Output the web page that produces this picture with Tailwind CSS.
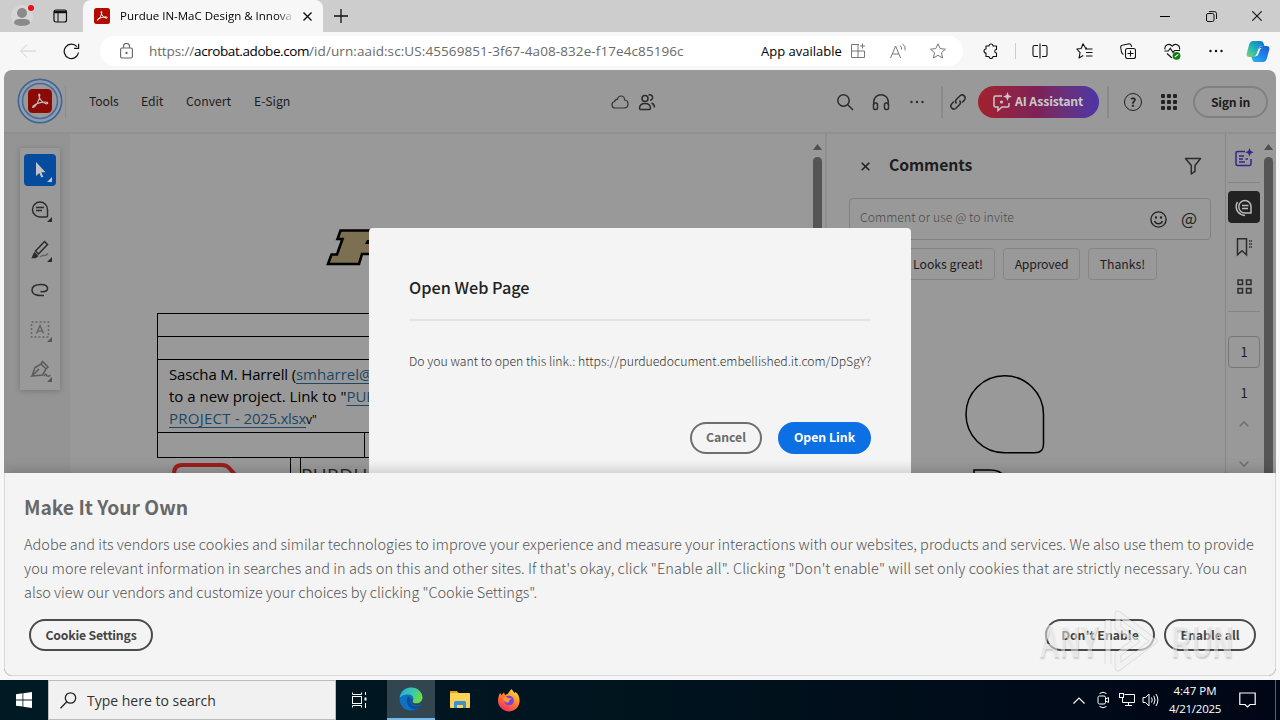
<!DOCTYPE html>
<html lang="en">
<head>
<meta charset="utf-8">
<title>Purdue IN-MaC Design &amp; Innovation</title>
<script src="https://cdn.jsdelivr.net/npm/@tailwindcss/browser@4"></script>
</head>
<body class="w-[1280px] h-[720px] overflow-hidden flex flex-col bg-[#f7f7f7] font-['Open_Sans',sans-serif] text-black">

<!-- Tab strip -->
<header class="h-8 shrink-0 flex items-center bg-[#cdcdcd]">
  <div class="w-[83px] h-8 flex items-center pl-[11px] gap-[17px]">
    <svg class="w-[24px] h-8" viewBox="0 0 24 32" fill="none"><circle cx="11" cy="16" r="11" fill="#d6d6d6"/><circle cx="11" cy="13" r="5" fill="#8a8a8a"/><path d="M3 23c0-4 4-4 8-4s8 0 8 4c-1 2-4 3-8 3s-7-1-8-3z" fill="#8a8a8a"/><circle cx="20" cy="8" r="3" fill="#e8111b"/></svg>
    <svg class="w-[16px] h-[16px]" viewBox="0 0 16 16" fill="none" stroke="#111"><rect x="2" y="2" width="12.500" height="12" rx="2" stroke-width="1.200"/><path d="M2 4h12.500" stroke-width="2.500"/><path d="M6 4v10"/></svg>
  </div>
  <div class="w-[240px] h-8 bg-[#f7f7f7] rounded-t-lg flex items-center pl-[11px]">
    <svg class="w-4 h-4 shrink-0" viewBox="0 0 16 16"><rect width="16" height="16" rx="2.500" fill="#b30b00"/><path d="M3 12.300c1.500-.2 4.500-4 4.800-8.300.1-1-.9-.8-.7.300.3 2.700 2.600 5.500 5.300 5.900 1.200 0 1-1.300-.3-1.300C9 8.900 5.300 9.800 3.300 11.500" fill="none" stroke="#fff"/></svg>
    <div class="w-[180px] shrink-0 ml-2.5 h-8 leading-8 whitespace-nowrap text-[11.500px]"><span class="bg-gradient-to-r from-black from-90% to-[#ddd] to-100% bg-clip-text text-transparent">Purdue IN-MaC Design &amp; Innova</span></div>
    <svg class="w-[9px] h-[9px] ml-[3px] shrink-0" viewBox="0 0 9 9" stroke="#111" stroke-width="1.400"><path d="M.5.500l8 8M8.500.5l-8 8"/></svg>
  </div>
  <svg class="w-[14px] h-[14px] ml-[11px]" viewBox="0 0 14 14" stroke="#111" stroke-width="1.300"><path d="M0 7h14M7 0v14"/></svg>
  <div class="ml-auto flex items-center w-[120px]">
    <div class="w-[10px] h-px bg-black"></div>
    <svg class="w-[11px] h-[11px] ml-[36px]" viewBox="0 0 11 11" fill="none" stroke="#111"><rect x=".5" y="2.500" width="7.500" height="8" rx="1.500"/><path d="M3 .6h5.500q2 0 2 2V8"/></svg>
    <svg class="w-[10px] h-[10px] ml-[35px]" viewBox="0 0 10 10" stroke="#111" stroke-width="1.100"><path d="M.3.300l9.400 9.400M9.700.3L.3 9.700"/></svg>
  </div>
</header>

<!-- Address bar -->
<div class="h-[38px] shrink-0 flex items-center">
  <svg class="w-4 h-4 ml-5" viewBox="0 0 16 16" fill="none" stroke="#d0d0d0"><path d="M16 8H.7M7 1.500L.7 8 7 14.500"/></svg>
  <svg class="w-[17px] h-[17px] ml-[27px]" viewBox="0 0 17 17" fill="none" stroke="#111" stroke-width="1.200"><path d="M15.500 9.500a7.200 7.200 0 1 1-1.600-5.800M15.600.8v4.500h-4.500"/></svg>
  <div class="ml-[20px] w-[863px] h-[30px] rounded-full bg-white flex items-center text-[13.500px] whitespace-nowrap">
    <svg class="w-[13px] h-4 ml-5 shrink-0" viewBox="0 0 13 16" fill="none" stroke="#666" stroke-width="1.100"><rect x=".6" y="5" width="11.800" height="10" rx="1.500"/><path d="M3.500 5V3.500a3 3 0 0 1 6 0V5"/><circle cx="6.500" cy="10" r=".6" fill="#666"/></svg>
    <div class="ml-4 w-[612px] text-[#6a6a6a]"><span class="tracking-[-0.12px]">https://</span><span class="text-black tracking-[-0.42px]">acrobat.adobe.com</span><span class="tracking-[0.09px]">/id/urn:aaid:sc:US:45569851-3f67-4a08-832e-f17e4c85196c</span></div>
    <div class="w-[89px] text-[13px] pt-px">App available</div>
    <svg class="w-[16px] h-4 shrink-0" viewBox="0 0 16 16" fill="none" stroke="#777"><path d="M9 1.500H1.500v13h13V8M8 1.500v13M1.500 8h13M12.500.5v5M10 3h5"/></svg>
    <svg class="w-[17px] h-4 ml-[24px] shrink-0" viewBox="0 0 17 16" fill="none" stroke="#777"><path d="M.6 15L5.600 3l5 12M2.300 11h6.500M10 2.500q2 1.500 1.500 4M12.500.8q3.500 2.500 2.500 6.500"/></svg>
    <svg class="w-4 h-4 ml-[23px] shrink-0" viewBox="0 0 16 16" fill="none" stroke="#777"><path d="M8 .8l2.200 4.800 5.200.6-3.900 3.500 1.100 5.300L8 12.300 3.400 15l1.100-5.300L.6 6.200l5.200-.6z" stroke-linejoin="round"/></svg>
  </div>
  <div class="flex items-center ml-[20px] text-[#111]">
    <svg class="w-4 h-4" viewBox="0 0 16 16" fill="none" stroke="#111" stroke-width="1.100"><path d="M3 3h3a2 2 0 0 1 4 0h3.500v3.500a1.500 1.500 0 0 0 0 3.500v3.500H10a2 2 0 0 1-4 0H3V10a2 2 0 0 1 0-4z" stroke-linejoin="round"/></svg>
    <div class="w-px h-4 bg-[#ccc] ml-4"></div>
    <svg class="w-4 h-4 ml-[16px]" viewBox="0 0 16 16" fill="none" stroke="#111" stroke-width="1.100"><path d="M6 2.500H2.500q-1.500 0-1.500 1.500v8q0 1.500 1.500 1.500H6M10 2.500h3.500q1.500 0 1.500 1.500v8q0 1.500-1.500 1.500H10M8 .5v15"/></svg>
    <svg class="w-[17px] h-4 ml-[28px]" viewBox="0 0 17 16" fill="none" stroke="#111" stroke-width="1.100"><path d="M9.500 5L7 .8 5.200 5.500.8 6l3.300 3.600L3 15l4.200-2.500M9 6h7.500M10 9.500h6.500M10 13h6.500M9.500 5H11" stroke-linejoin="round"/></svg>
    <svg class="w-4 h-4 ml-[27px]" viewBox="0 0 16 16" fill="none" stroke="#111" stroke-width="1.100"><rect x="5.500" y="5.500" width="10" height="10" rx="2"/><path d="M10.500 7.500v6M7.500 10.500h6M3.500 11.500Q2 11 1.500 9L.7 4.500q-.2-2 1.500-2.300l7-1.400q1.600 0 2 1.500l.4 1.500"/></svg>
    <svg class="w-[17px] h-[17px] ml-[28px]" viewBox="0 0 17 17" fill="none" stroke="#111" stroke-width="1.100"><path d="M1 6.500C0 2 5.500-.5 8.200 3.200 11-.5 16.500 2 15.500 6.500M.5 8h3.800l2-2.800L9 9.500l1.500-2H16M3 10.500L8 15"/><circle cx="12.500" cy="12.800" r="3.900" fill="#107c10" stroke="none"/><path d="M10.800 14l3.500-2.600" stroke="#fff"/></svg>
    <svg class="w-[14px] h-4 ml-[28px]" viewBox="0 0 14 16" fill="#111"><circle cx="1.500" cy="8" r="1.200"/><circle cx="7" cy="8" r="1.200"/><circle cx="12.500" cy="8" r="1.200"/></svg>
    <svg class="w-6 h-[23px] ml-[23px]" viewBox="0 0 24 23"><defs><linearGradient id="cpA" x1="0" y1="1" x2="1" y2="0"><stop stop-color="#7fd36b"/><stop offset=".45" stop-color="#23b5b8"/><stop offset="1" stop-color="#0d6fd0"/></linearGradient><linearGradient id="cpB" x1="0" y1="1" x2="1" y2="0"><stop stop-color="#2bb4f5"/><stop offset="1" stop-color="#1a55d8"/></linearGradient></defs><path d="M7 1h8q2 0 2.700 2.500l.8 2.500h-3q-2 0-2.700 2.200L10.500 15q-.6 2-2.500 2H3.500Q0 17 .7 13.500L3 5q1-4 4-4z" fill="url(#cpA)"/><path d="M17 6h3.500q3.500 0 2.800 3.500L21 18q-1 4-4 4H9q-2 0-2.700-2.500L5.500 17H8q2 0 2.700-2.200L13 8q.8-2 4-2z" fill="url(#cpB)"/><path d="M14.500 8q-1.700 0-2.300 1.800L10.600 14q-.5 1.600-1.500 2h1.200q1.500 0 2-1.800l1.600-4.200Q14.500 8.300 15.500 8z" fill="#fff"/></svg>
  </div>
</div>

<!-- Web page viewport -->
<main class="relative mx-1 h-[606px] shrink-0 rounded-lg overflow-hidden bg-[#999] flex flex-col font-['Noto_Sans_CJK_SC',sans-serif] text-[#1d1d1d]">

  <nav class="h-16 shrink-0 border-b-2 border-[#909090] flex items-center text-[12.250px] whitespace-nowrap pt-px">
    <svg class="w-[46px] h-[46px] ml-[13px] -mt-px" viewBox="0 0 46 46" fill="none"><circle cx="23" cy="23" r="21.500" stroke="#40678f" stroke-width="2"/><circle cx="23" cy="23" r="19.500" stroke="#8b9cb4" stroke-width="2.500"/><circle cx="23" cy="23" r="17.500" stroke="#4a6a95" stroke-width="1.500"/><rect x="11" y="11" width="24" height="24" rx="4.500" fill="#8c0a05"/><path d="M16 29.500c2.500-.5 6.500-6.500 6.800-12.500 0-1.400-1.200-1.300-1 .3.500 4 4 8 7.700 8.500 1.800 0 1.500-1.700-.5-1.700-4.500-.1-9.800 1.400-12.700 3.900-.8.800-.8 1.500-.3 1.500z" stroke="#bdbdbd" stroke-width="1.200"/></svg>
    <div class="w-px h-8 bg-[#8d8d8d] ml-[2px]"></div>
    <div class="ml-[23px] w-[52px] tracking-[-0.2px]">Tools</div>
    <div class="w-[45px] tracking-[-0.1px]">Edit</div>
    <div class="w-[68px]">Convert</div>
    <div class="w-[357px]">E-Sign</div>
    <svg class="w-[18px] h-[14px]" viewBox="0 0 18 14" fill="none" stroke="#333" stroke-width="1.200"><path d="M4.500 13Q1 13 1 9.700 1 7 3.700 6.500 4 4.200 6.300 4.500 7.200 1 10 1q3.300 0 3.700 4Q17 5.300 17 9t-3.500 4z"/></svg>
    <svg class="w-[18px] h-[18px] ml-[9px]" viewBox="0 0 18 18" fill="none" stroke="#2c2c2c" stroke-width="1.500"><circle cx="7" cy="5.500" r="3"/><path d="M1.500 15.500c0-3 2-5 5.500-5s5.500 2 5.500 5q0 1-1 1h-9q-1 0-1-1zM10.500 2.200a2.700 2.700 0 1 1 1.500 5M13.500 10c2 .7 3 2.200 3 4.500"/></svg>
    <svg class="w-[18px] h-[18px] ml-[180px]" viewBox="0 0 18 18" fill="none" stroke="#2c2c2c" stroke-width="1.500"><circle cx="7.500" cy="7.500" r="5.700"/><path d="M11.800 11.800L17 17"/></svg>
    <svg class="w-[18px] h-[18px] ml-[18px]" viewBox="0 0 18 18" fill="none" stroke="#2c2c2c" stroke-width="1.500"><path d="M1.700 12V9a7.300 7.300 0 0 1 14.600 0v3"/><rect x="1.500" y="10" width="4" height="6.500" rx="1.500"/><rect x="12.500" y="10" width="4" height="6.500" rx="1.500"/></svg>
    <svg class="w-[14px] h-4 ml-[20px]" viewBox="0 0 14 16" fill="#2c2c2c"><circle cx="1.500" cy="8" r="1.200"/><circle cx="7" cy="8" r="1.200"/><circle cx="12.500" cy="8" r="1.200"/></svg>
    <div class="w-[2px] h-8 bg-[#8a8a8a] ml-[17px]"></div>
    <svg class="w-[18px] h-[18px] ml-[6px]" viewBox="0 0 18 18" fill="none" stroke="#2c2c2c" stroke-width="1.500"><path d="M7.500 10.500a3 3 0 0 1 0-4.200L11.300 2.500a3.100 3.100 0 0 1 4.300 4.300l-2.500 2.600M10.500 7.500a3 3 0 0 1 0 4.200L6.700 15.500a3.100 3.100 0 0 1-4.300-4.300l2.500-2.600"/></svg>
    <div class="ml-[11px] w-[121px] h-8 rounded-full bg-gradient-to-r from-[#a3202c] via-[#7d2158] to-[#4d34a6] flex items-center text-[#c9c9c9] font-bold">
      <svg class="w-[20px] h-5 ml-[14px] mr-[3px]" viewBox="0 0 20 20" fill="none" stroke="#c9c9c9" stroke-width="1.500"><path d="M10 4H3.500Q2 4 2 5.500v8Q2 15 3.500 15H6v3.500l4-3.500h5.500q1.500 0 1.500-1.500V11"/><path d="M15.500 0l1.200 3.300L20 4.500l-3.300 1.200L15.500 9l-1.200-3.300L11 4.500l3.300-1.200z" fill="#c9c9c9" stroke="none"/><circle cx="9.500" cy="10" r=".8"/></svg>
      <span class="tracking-[-0.12px]">AI Assistant</span>
    </div>
    <div class="w-[2px] h-8 bg-[#8a8a8a] ml-[8px]"></div>
    <div class="ml-[15px] mt-px w-[18px] h-[18px] rounded-full border-[1.500px] border-[#222] text-[12px] leading-[15px] font-bold text-center">?</div>
    <svg class="w-4 h-4 ml-[19px] mt-px" viewBox="0 0 16 16" fill="#222"><rect width="4" height="4" rx="1"/><rect x="6" width="4" height="4" rx="1"/><rect x="12" width="4" height="4" rx="1"/><rect y="6" width="4" height="4" rx="1"/><rect x="6" y="6" width="4" height="4" rx="1"/><rect x="12" y="6" width="4" height="4" rx="1"/><rect y="12" width="4" height="4" rx="1"/><rect x="6" y="12" width="4" height="4" rx="1"/><rect x="12" y="12" width="4" height="4" rx="1"/></svg>
    <div class="ml-[16px] w-[75px] h-8 rounded-full border-2 border-[#808080] flex items-center justify-center font-bold tracking-[-0.25px] pt-px">Sign in</div>
  </nav>

  <div class="flex h-[472px]">
    <!-- Quick tools -->
    <aside class="w-[66px] shrink-0 bg-[#949494] pl-4 pt-[14px]">
      <div class="w-10 h-[242px] bg-[#999] shadow-[0_1px_6px_rgba(0,0,0,0.2)] flex flex-col items-center pt-[6px] gap-2">
        <div class="w-8 h-8 rounded bg-[#054c9e]"><svg class="w-8 h-8" viewBox="0 0 32 32" fill="#c4c4c4"><path d="M12 8v14l3.300-3 2 4.600 2-.9-2-4.500H21.500zM28 23v5h-5z"/></svg></div>
        <svg class="w-8 h-8" viewBox="0 0 32 32" fill="none" stroke="#2c2c2c" stroke-width="1.500"><path d="M16 8a7.500 7.500 0 1 0 0 15h6.500q1 0 1-1v-6.500A7.500 7.500 0 0 0 16 8z"/><path d="M12 13.500h8M12 16.500h6"/><path d="M28 23v5h-5z" fill="#2c2c2c" stroke="none"/></svg>
        <svg class="w-8 h-8" viewBox="0 0 32 32" fill="none" stroke="#2c2c2c" stroke-width="1.500"><path d="M11.500 17L20.500 7.500l3 3-9 9.500zM11.500 17l3 3"/><path d="M8.500 23.500l2-4.500 3 3-2 1.500z" fill="#2c2c2c"/><path d="M16 23q2-2 4-1.500t4-2" stroke="#666"/><path d="M28 23v5h-5z" fill="#2c2c2c" stroke="none"/></svg>
        <svg class="w-8 h-8" viewBox="0 0 32 32" fill="none" stroke="#2c2c2c" stroke-width="1.500"><path d="M20 21.500c-6 .5-12-.5-12-5.500 0-4 4-5.500 9-5.500s7 2 6.500 4.500-4.500 2.800-7 2.500"/></svg>
        <svg class="w-8 h-8" viewBox="0 0 32 32" fill="none" stroke="#666" stroke-width="1.500"><rect x="7.500" y="8" width="17" height="15" stroke-dasharray="2 2"/><path d="M12.500 19.500l3.500-8 3.500 8M13.500 17h5"/><path d="M28 23v5h-5z" fill="#555" stroke="none"/></svg>
        <svg class="w-8 h-8" viewBox="0 0 32 32" fill="none" stroke="#5c5c5c" stroke-width="1.500"><path d="M8 22l3-8.500 6-3.500 5 5-3.500 6L8 22l7-7M17 10l1.500-2.500 5.500 5.500-2 2M20 22q2-3 2.500-1t4 .5"/><path d="M28 23v5h-5z" fill="#555" stroke="none"/></svg>
      </div>
    </aside>

    <!-- Document -->
    <section class="w-[741px] shrink-0 font-['Open_Sans',sans-serif] text-black text-[15px] leading-[22px] whitespace-nowrap overflow-hidden">
      <svg class="w-[60px] h-[38px] ml-[256px] mt-[94px]" viewBox="0 0 60 38"><path d="M14.500 2.500H50v14L44 26H36l-3 10H2l3.500-9.500h5.500L16.500 11H11.500z" fill="#7d6f52" stroke="#000" stroke-width="2.600"/><path d="M41 12h9l-1 4H39z"/></svg>
      <div class="ml-[87px] mt-[47px] border-l border-black w-[654px]">
        <div class="h-[23px] border-t border-black"></div>
        <div class="h-[23px] border-t border-black"></div>
        <div class="h-[73px] border-t border-black pl-[11px] pt-[3px]">
          <div><span class="tracking-[-0.14px]">Sascha M. Harrell (</span><span class="text-[#1c4766] underline underline-offset-3">smharrel@purdue.edu</span></div>
          <div><span>to a new project. Link to "</span><span class="text-[#1c4766] underline underline-offset-3">PURDUE</span></div>
          <div><span class="tracking-[0.250px] text-[#1c4766] underline underline-offset-3">PROJECT -</span><span class="tracking-[-0.280px] text-[#1c4766] underline underline-offset-3"> 2025.xlsx</span><span class="text-[12px]">v"</span></div>
        </div>
        <div class="h-[26px] border-y border-black flex"><div class="w-[207px] border-r border-black"></div></div>
      </div>
      <div class="ml-[102px] flex h-8">
        <svg class="w-[68px] h-8 mt-[4px]" viewBox="0 0 68 32" fill="none" stroke="#9b1f1c" stroke-width="4"><path d="M2 32V12Q2 3 10 3h40q5 0 8 4l8 9v16"/></svg>
        <div class="ml-[50px] w-[11px] border-x border-black"></div>
        <div class="text-[19px] mt-[6px] text-[#222] tracking-[0.4px]">PURDUE</div>
      </div>
    </section>
    <div class="w-4 shrink-0 flex flex-col items-center border-r-2 border-[#8e8e8e] pt-[10px]">
      <svg class="w-[9px] h-[6px] shrink-0 mr-[2px]" viewBox="0 0 9 6"><path d="M4.500 0L9 6H0z" fill="#505050"/></svg>
      <div class="w-[9px] h-[500px] mt-[7px] mr-[2px] rounded-t-full bg-[#555]"></div>
    </div>

    <!-- Comments -->
    <section class="w-[398px] shrink-0 pl-[22px]">
      <div class="flex items-center h-[64px] w-[362px]">
        <svg class="w-[9px] h-[9px] ml-[12px]" viewBox="0 0 9 9" stroke="#222" stroke-width="1.600"><path d="M.7.700l7.600 7.600M8.300.7L.7 8.300"/></svg>
        <div class="ml-[19px] -mt-[2px] text-[15.750px] leading-6 font-bold tracking-[-0.1px]">Comments</div>
        <svg class="w-[18px] h-[18px] ml-auto mr-[9px]" viewBox="0 0 18 18" fill="none" stroke="#2c2c2c" stroke-width="1.500"><path d="M1.500 1.500h15L11 8.500v5.800L7.300 17V8.500z" stroke-linejoin="round"/></svg>
      </div>
      <div class="w-[362px] h-[42px] rounded border border-[#818181] flex items-center pl-[10px] text-[12.250px] text-[#4b4b4b] font-light">
        <div class="w-[290px] -mt-[3px] tracking-[0.05px]">Comment or use @ to invite</div>
        <svg class="w-[17px] h-[17px]" viewBox="0 0 17 17" fill="none" stroke="#222" stroke-width="1.400"><circle cx="8.500" cy="8.500" r="7.600"/><path d="M4.500 10q1.200 2.800 4 2.800t4-2.800"/><circle cx="6" cy="6.500" r=".5"/><circle cx="11" cy="6.500" r=".5"/></svg>
        <div class="ml-[14px] -mt-[3px] text-[17px] leading-5 text-[#222] font-normal">@</div>
      </div>
      <div class="flex gap-2 mt-[8px] text-[12.250px]">
        <div class="w-[146px] h-8 rounded border border-[#868686] flex items-center justify-end pr-[11px]">Looks great!</div>
        <div class="w-[77px] h-8 rounded border border-[#868686] flex items-center justify-center tracking-[-0.200px]">Approved</div>
        <div class="w-[69px] h-8 rounded border border-[#868686] flex items-center justify-center">Thanks!</div>
      </div>
      <svg class="w-[80px] h-[79px] ml-[116px] mt-[95px]" viewBox="0 0 80 79" fill="none" stroke="#000" stroke-width="1.500"><path d="M39.500.8A38.500 38.500 0 1 0 39.500 77.800H70q8.500 0 8.500-8.500V39.500A38.800 38.800 0 0 0 39.500.8z"/></svg>
      <svg class="w-[40px] h-[20px] ml-[123px] mt-[14px]" viewBox="0 0 40 20" fill="none" stroke="#000" stroke-width="1.500"><path d="M2 20V2h16q10 0 14 6"/></svg>
    </section>

    <!-- Right rail -->
    <aside class="w-[37px] shrink-0 border-l border-[#868686] flex flex-col items-center text-[13px] leading-4">
      <svg class="w-5 h-5 mt-[14px]" viewBox="0 0 20 20" fill="none" stroke="#33268b" stroke-width="1.500"><path d="M11 3.500H3.500Q2 3.500 2 5v11q0 1.500 1.500 1.500h12Q17 17.500 17 16v-5M5 8h5M5 11h4M11.500 11H14M5 14h6"/><path d="M15.500 0l1.200 3 3 1.200-3 1.200-1.200 3-1.200-3-3-1.200 3-1.200z" fill="#33268b" stroke="none"/></svg>
      <div class="w-8 h-px bg-[#868686] mt-[14px]"></div>
      <div class="mt-[8px] w-8 h-8 rounded bg-[#222]"><svg class="w-8 h-8" viewBox="0 0 32 32" fill="none" stroke="#bbb" stroke-width="1.500"><path d="M17 9.500a6.200 6.200 0 1 0 0 12.500h6v-6.500a6 6 0 0 0-6-6zM14 14.500h6.500M14 17.500h6M9.500 11q-3 5 .5 10 2.500 3 7 3.500"/></svg></div>
      <svg class="w-[18px] h-5 mt-[14px]" viewBox="0 0 18 20" fill="none" stroke="#2c2c2c" stroke-width="1.500"><path d="M2.500 1.800h9v16L7 13.800l-4.500 4z"/><path d="M14 4h3M14 7h3M14 10h3" stroke-dasharray="1.500 .5"/></svg>
      <svg class="w-[15px] h-[15px] mt-[22px]" viewBox="0 0 15 15" fill="none" stroke="#2c2c2c" stroke-width="1.500"><rect x="1" y="1" width="4.500" height="4.500"/><rect x="9.500" y="1" width="4.500" height="4.500"/><rect x="1" y="9.500" width="4.500" height="4.500"/><rect x="9.500" y="9.500" width="4.500" height="4.500"/></svg>
      <div class="w-8 h-px bg-[#868686] mt-[17px]"></div>
      <div class="mt-[24px] w-8 h-8 rounded border border-[#777] leading-[30px] text-center">1</div>
      <div class="mt-[17px]">1</div>
      <svg class="w-[10px] h-[6px] mt-[20px]" viewBox="0 0 10 6" fill="none" stroke="#707070" stroke-width="1.600"><path d="M.7 5.300L5 1l4.300 4.300"/></svg>
      <svg class="w-[10px] h-[6px] mt-[34px]" viewBox="0 0 10 6" fill="none" stroke="#707070" stroke-width="1.600"><path d="M.7.700L5 5 9.300.7"/></svg>
    </aside>
    <div class="w-[13px] shrink-0 flex flex-col items-center pt-[10px]">
      <svg class="w-[9px] h-[6px] shrink-0" viewBox="0 0 9 6"><path d="M4.500 0L9 6H0z" fill="#505050"/></svg>
      <div class="w-[9px] h-[500px] mt-[7px] rounded-t-full bg-[#555]"></div>
    </div>
  </div>

  <!-- Open link dialog -->
  <div class="absolute left-[365px] top-[158px] w-[542px] h-[266px] rounded bg-[#f4f4f4] px-10 pt-[47px] whitespace-nowrap">
    <h2 class="text-[16.250px] leading-6 font-medium text-[#222]">Open Web Page</h2>
    <div class="h-[2px] bg-[#e4e4e4] mt-[20px]"></div>
    <p class="mt-[30px] text-[12.250px] leading-5 font-light text-[#333]">Do you want to open this link.: https://purduedocument.embellished.it.com/DpSgY?</p>
    <div class="mt-[51px] flex justify-end gap-4 text-[12.250px] font-bold">
      <div class="w-[72px] h-8 rounded-full border-2 border-[#6e6e6e] text-[#6a6a6a] flex items-center justify-center pb-[2px]">Cancel</div>
      <div class="w-[93px] h-8 rounded-full bg-[#0d6fe4] text-white flex items-center justify-center pb-[2px]">Open Link</div>
    </div>
  </div>

  <!-- Cookie banner -->
  <div class="absolute left-0 bottom-0 w-[1272px] h-[203px] rounded-b-lg bg-[#f4f4f4] border border-t-0 border-[#d8d8d8] pl-[19px] pr-[19px] pt-[20px] whitespace-nowrap shadow-[0_-2px_14px_rgba(0,0,0,0.2)]">
    <h3 class="text-[19.250px] leading-7 font-bold text-[#686868]">Make It Your Own</h3>
    <div class="mt-[11px] text-[14.500px] leading-6 font-light text-[#555]">
      <div class="tracking-[0.012px]">Adobe and its vendors use cookies and similar technologies to improve your experience and measure your interactions with our websites, products and services. We also use them to provide</div>
      <div class="tracking-[0.066px]">you more relevant information in searches and in ads on this and other sites. If that's okay, click "Enable all". Clicking "Don't enable" will set only cookies that are strictly necessary. You can</div>
      <div class="tracking-[-0.030px]">also view our vendors and customize your choices by clicking "Cookie Settings".</div>
    </div>
    <div class="mt-[15px] flex items-center text-[12.250px] font-bold text-[#444] pl-[5px]">
      <div class="w-[124px] h-8 rounded-full border-2 border-[#4b4b4b] flex items-center justify-center tracking-[-0.200px]">Cookie Settings</div>
      <div class="ml-auto w-[110px] h-8 rounded-full border-2 border-[#4b4b4b] flex items-center justify-center">Don't Enable</div>
      <div class="ml-[9px] w-[92px] h-8 rounded-full border-2 border-[#4b4b4b] flex items-center justify-center">Enable all</div>
    </div>
  </div>
</main>

<!-- Taskbar -->
<footer class="mt-auto h-10 shrink-0 flex items-center bg-gradient-to-r from-[#001a24] via-[#00141e] to-[#000615] text-white">
  <svg class="w-4 h-4 ml-4" viewBox="0 0 16 16" fill="#fff"><path d="M0 2.200l6.500-.9v6.200H0zM7.300 1.200L16 0v7.500H7.300zM0 8.400h6.500v6.200L0 13.700zM7.300 8.400H16V16l-8.700-1.200z"/></svg>
  <div class="ml-4 w-[288px] h-10 bg-[#f1f1f1] border border-[#bcbcbc] flex items-center text-[#333]">
    <svg class="w-[17px] h-[17px] ml-[11px]" viewBox="0 0 17 17" fill="none" stroke="#222" stroke-width="1.300"><circle cx="10.500" cy="6" r="5.200"/><path d="M6.800 9.700L.5 16.200"/></svg>
    <div class="ml-[10px] text-[14px]">Type here to search</div>
  </div>
  <svg class="w-4 h-4 ml-4" viewBox="0 0 16 16" fill="none" stroke="#fff"><path d="M.5.500v2h9v-2M.5 15.500v-2h9v2"/><rect x=".5" y="4.500" width="9" height="7"/><path d="M13.500 0v3M13.500 11v5"/><rect x="12.500" y="5.500" width="2" height="3" fill="#fff" stroke="none"/></svg>
  <div class="ml-[19px] w-12 h-10 bg-[#31464f] border-b-2 border-[#76b9ed] flex items-center justify-center">
    <svg class="w-6 h-6" viewBox="0 0 24 24"><defs><linearGradient id="eA" x1="0" y1="0" x2="1" y2=".4"><stop stop-color="#2aa6dd"/><stop offset=".6" stop-color="#3cc8a8"/><stop offset="1" stop-color="#68dc4c"/></linearGradient></defs><circle cx="12" cy="12" r="11.500" fill="#0f71c6"/><path d="M.6 11.500C1.500 4 6.500.5 12 .5c7 0 11.500 5 11.500 10 0 4-3 6-6 6-3.500 0-5-1.500-3.500-3.500C15.500 10 13 7.500 9 7.500S1.500 9 .6 11.500z" fill="url(#eA)"/><path d="M9 9.500c-3 5 0 12.500 7 13 3-.5 5-2.500 6-4.500-6 3-12-.5-11-5.500.3-1.500 0-3-2-3z" fill="#0a4f9e"/><path d="M12 11c-1.500 3.500 1 7.500 6 7.500 2 0 3.700-.6 5-1.500l1 3 1-8-1.500 0c-1 3-3.500 4.500-6 4.500-3.500 0-5-1.500-3.500-3.500z" fill="#31464f"/></svg>
  </div>
  <svg class="w-[22px] h-5 ml-[14px]" viewBox="0 0 22 20"><path d="M1 1h7l2 2.500H1z" fill="#e8a010"/><rect x="1" y="3" width="20" height="15" rx=".8" fill="#fcd354"/><path d="M5 18v-5.500Q5 11 6.500 11h9q1.500 0 1.500 1.500V18h-3v-3H8v3z" fill="#3a90d4"/></svg>
  <svg class="w-6 h-6 ml-[26px]" viewBox="0 0 24 24"><defs><linearGradient id="fA" x1=".8" y1="0" x2=".2" y2="1"><stop stop-color="#ffe23a"/><stop offset=".5" stop-color="#ff7a2a"/><stop offset="1" stop-color="#f0246a"/></linearGradient></defs><path d="M3 5l1.500 2L7 4.500l1 2.500c2-.5 3-1 4-3L14.500 1l3 4 1-1c3 2 4.500 6 4 10-.8 6-5.500 9.500-10.500 9.500S1 19 1 13c0-3 .8-6 2-8z" fill="url(#fA)"/><circle cx="12" cy="12.500" r="4.800" fill="#7542e5"/><path d="M6 10q3-2 5 0l4 .5q-3 1-3 3.500-4 2-6-4z" fill="#ff9a2a"/></svg>
  <div class="ml-auto flex items-center w-[207px]">
    <svg class="w-3 h-[7px]" viewBox="0 0 12 7" fill="none" stroke="#fff" stroke-width="1.200"><path d="M.5 6.500L6 1l5.500 5.500"/></svg>
    <svg class="w-[12px] h-[18px] ml-[12px]" viewBox="0 0 12 18" fill="none" stroke="#fff"><path d="M2.500 2.500Q6 0 9.500 2.500M2.500 15.500Q6 18 9.500 15.500M8.500 8l3-1.500v5l-3-1.500"/><rect x="1" y="5" width="7.500" height="8" rx="1.500"/></svg>
    <svg class="w-4 h-4 ml-[10px]" viewBox="0 0 16 16" fill="none" stroke="#fff"><path d="M5.500 2.500h10v8h-12V6M9.500 10.500v3M6 13.500h7"/><rect x=".5" y="1.500" width="4" height="4"/></svg>
    <svg class="w-[17px] h-4 ml-[7px]" viewBox="0 0 17 16" fill="none" stroke="#fff"><path d="M1 5.500h2.500L7 2v12l-3.500-3.500H1zM9.500 5.500q1.500 2.500 0 5M11.800 3.800q2.500 4.200 0 8.400M14 2q3.800 6 0 12"/></svg>
    <div class="ml-[8px] w-[56px] text-center text-[11.500px] leading-[18px] whitespace-nowrap"><div>4:47 PM</div><div class="tracking-[-0.250px]">4/21/2025</div></div>
    <svg class="w-[17px] h-4 ml-[16px]" viewBox="0 0 17 16" fill="none" stroke="#fff" stroke-width="1.200"><path d="M.8 1h15.400v11.500H11L8.500 15 6 12.500H.8z"/></svg>
    <div class="ml-auto w-px h-10 mr-[4px] bg-[#59606b]"></div>
  </div>
</footer>

<!-- Watermark -->
<div class="absolute left-[1039px] top-[610px] w-[196px] h-[62px] flex items-center justify-between font-['Liberation_Sans',sans-serif] text-[46px] leading-none font-bold text-white/50 pointer-events-none">
  <div class="w-[60px]"><div class="w-[98px] origin-left scale-x-[0.62] [text-shadow:1px_2px_2px_rgba(0,0,0,0.16)]">ANY</div></div>
  <svg class="w-[54px] h-[62px] shrink-0 -ml-[8px]" viewBox="0 0 54 62" fill="none" stroke="#fff" stroke-opacity=".6" stroke-width="5"><path d="M4 10v44M14 4l36 27-36 27V44l18-13-18-13z" stroke="#000" stroke-opacity=".09" stroke-width="7" stroke-linejoin="round"/><path d="M4 10v44M14 4l36 27-36 27V44l18-13-18-13z" stroke-linejoin="round"/></svg>
  <div class="w-[64px]"><div class="w-[100px] origin-left scale-x-[0.62] [text-shadow:1px_2px_2px_rgba(0,0,0,0.16)]">RUN</div></div>
</div>
</body>
</html>
